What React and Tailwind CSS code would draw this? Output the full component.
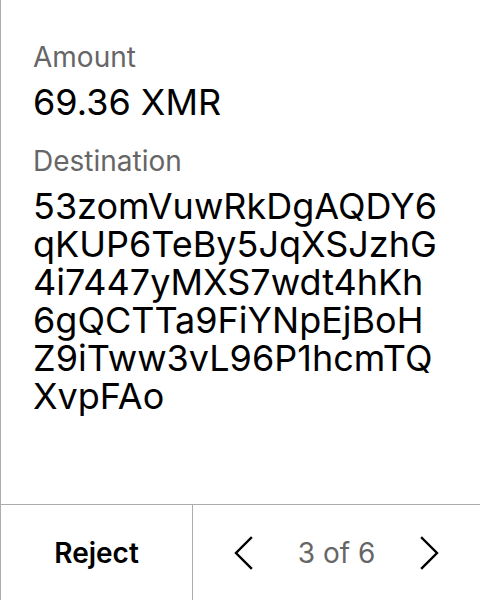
import React from 'react';

const Chevron = ({ dir }) => (
    <svg width="22" height="34" viewBox="0 0 22 34" fill="none" stroke="#000" strokeWidth="2.4" strokeLinecap="square">
        {dir === 'left' ? <path d="M19 2 L4 17 L19 32" /> : <path d="M3 2 L18 17 L3 32" />}
    </svg>
);

const addressLines = [
    '53zomVuwRkDgAQDY6',
    'qKUP6TeBy5JqXSJzhG',
    '4i7447yMXS7wdt4hKh',
    '6gQCTTa9FiYNpEjBoH',
    'Z9iTww3vL96P1hcmTQ',
    'XvpFAo',
];

const App = () => {
    return (
        <div className="w-[480px] h-[600px] bg-white border-l border-[#ababab] flex flex-col font-['Inter',sans-serif] text-black">
            {/* Details */}
            <div className="flex-1 pl-[32px] pt-[41px]">
                <div className="text-[28px] leading-[32px] text-[#666666]">Amount</div>
                <div className="mt-[10px] text-[36px] leading-[38px]">69.36 XMR</div>

                <div className="mt-[24px] text-[28px] leading-[32px] text-[#666666]">Destination</div>
                <div className="mt-[10px] text-[36px] leading-[38px]">
                    {addressLines.map((line) => (
                        <div key={line}>{line}</div>
                    ))}
                </div>
            </div>

            {/* Actions */}
            <div className="h-[96px] border-t border-[#ababab] flex">
                <button className="w-[192px] border-r border-[#ababab] text-[28px] font-semibold">Reject</button>
                <div className="flex-1 flex items-center justify-between px-[39px]">
                    <Chevron dir="left" />
                    <span className="text-[28px] text-[#666666]">3 of 6</span>
                    <Chevron dir="right" />
                </div>
            </div>
        </div>
    );
};

export default App;
